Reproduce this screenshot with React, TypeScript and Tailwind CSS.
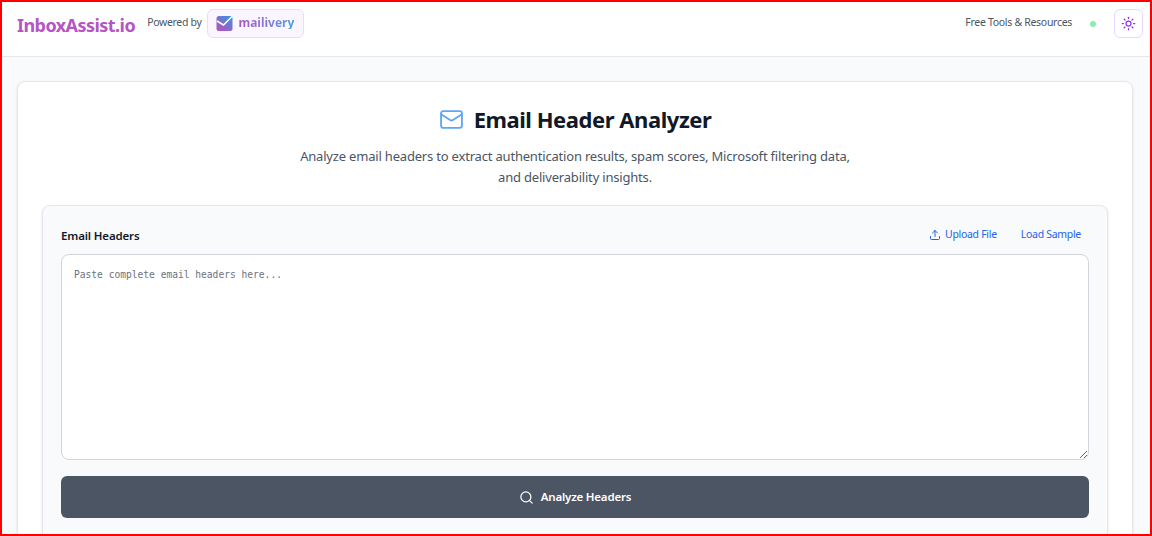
import React from "react";
import { Mail, Search, Sun, Upload } from "lucide-react";

function MailiveryMark() {
  return (
    <svg width="17" height="17" viewBox="0 0 17 17">
      <defs>
        <linearGradient id="mk" x1="0.1" y1="1" x2="0.8" y2="0">
          <stop offset="0" stopColor="#bb4fbd" />
          <stop offset="1" stopColor="#3f8fe0" />
        </linearGradient>
      </defs>
      <rect width="16" height="15" x="0.5" y="1" rx="2.5" fill="url(#mk)" />
      <path d="M1 6 L7.5 10 L16 1.5" fill="none" stroke="#fff" strokeWidth="1.5" />
    </svg>
  );
}

export default function App() {
  return (
    <div className="h-[536px] overflow-hidden border-2 border-[#ff0000] bg-[#f9fafb] font-['Noto_Sans',sans-serif] text-[#111827]">
      {/* header */}
      <header className="h-[55px] border-b border-[#e5e7eb] bg-white pl-[15px] pr-[7px] pb-[12px] flex items-center justify-between">
        <div className="flex items-center">
          <span className="text-[18px] font-bold leading-none tracking-[-0.55px] text-[#b555c4] mt-[3px]">InboxAssist.io</span>
          <span className="ml-[12px] text-[10.5px] tracking-[-0.32px] text-[#4b5563]">Powered by</span>
          <div className="ml-[6px] h-[29px] w-[97px] rounded-md border border-[#eadcfb] bg-[#faf5ff] flex items-center gap-[5px] pl-[8px]">
            <MailiveryMark />
            <span className="text-[12px] font-bold leading-none bg-gradient-to-r from-[#a855c0] to-[#3b9be8] bg-clip-text text-transparent">mailivery</span>
          </div>
        </div>
        <div className="flex items-center">
          <span className="text-[10.5px] tracking-[-0.3px] text-[#4b5563]">Free Tools &amp; Resources</span>
          <span className="ml-[18px] mt-[2px] w-[6px] h-[6px] rounded-full bg-[#86efac]" />
          <button className="ml-[18px] w-[29px] h-[29px] rounded-md border border-[#e9d5ff] bg-white flex items-center justify-center">
            <Sun size={15} className="text-[#9333ea]" />
          </button>
        </div>
      </header>

      {/* main card */}
      <main className="pt-[24px] pl-[15px] pr-[17px]">
        <div className="rounded-lg border border-[#e5e7eb] bg-white shadow-sm px-[24px] pt-[22px] pb-6">
          <div className="flex items-center justify-center gap-[10px]">
            <Mail size={25} strokeWidth={1.8} className="text-[#60a5fa]" />
            <h1 className="text-[22px] font-bold leading-[31px] tracking-[-0.45px] text-[#111827]">Email Header Analyzer</h1>
          </div>
          <p className="mt-[11px] mx-auto w-[600px] text-center text-[13px] leading-[21px] tracking-[-0.19px] text-[#4b5563]">
            Analyze email headers to extract authentication results, spam scores, Microsoft filtering data,
            <br />
            and deliverability insights.
          </p>

          <section className="mt-[17px] rounded-lg border border-[#e5e7eb] bg-[#f9fafb] shadow-sm px-[18px] pt-[18px] pb-10">
            <div className="flex items-center justify-between h-[22px] pr-[8px]">
              <label className="text-[11.5px] font-semibold tracking-[-0.15px] mt-[1px] text-[#111827]">Email Headers</label>
              <div className="flex items-center gap-[24px] text-[10.5px] tracking-[-0.3px] text-[#2563eb]">
                <span className="flex items-center gap-[4px]">
                  <Upload size={12} />
                  Upload File
                </span>
                <span>Load Sample</span>
              </div>
            </div>
            <textarea
              className="mt-[8px] block w-full h-[206px] rounded-lg border border-[#d1d5db] bg-white px-3 py-[11px] font-['DejaVu_Sans_Mono',monospace] text-[9.6px] leading-[18px] outline-none placeholder:text-[#6b7280]"
              placeholder="Paste complete email headers here..."
            />
            <button className="mt-4 w-full h-[42px] rounded-md bg-[#4b5563] text-white text-[11.5px] font-semibold tracking-[-0.2px] flex items-center justify-center gap-[7px]">
              <Search size={15} />
              Analyze Headers
            </button>
          </section>
        </div>
      </main>
    </div>
  );
}
